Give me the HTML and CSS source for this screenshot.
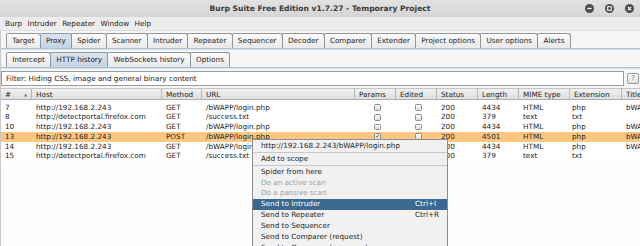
FILE: index.html
```html
<!DOCTYPE html>
<html>
<head>
<meta charset="utf-8">
<link rel="stylesheet" href="styles.css">
</head>
<body>
<div class="window">
  <div class="titlebar">
    <div></div>
    <div class="title">Burp Suite Free Edition v1.7.27 - Temporary Project</div>
    <div class="wbtns">
      <svg class="wbtn" viewBox="0 0 10 10"><circle cx="5" cy="5" r="5" fill="#4d4d4d"/><rect x="2.6" y="4.3" width="4.8" height="1.4" fill="#fff"/></svg>
      <svg class="wbtn" viewBox="0 0 10 10"><circle cx="5" cy="5" r="5" fill="#4d4d4d"/><rect x="3" y="3" width="4" height="4" fill="none" stroke="#fff" stroke-width="1.1"/></svg>
      <svg class="wbtn" viewBox="0 0 10 10"><circle cx="5" cy="5" r="5" fill="#4d4d4d"/><path d="M3.2 3.2L6.8 6.8M6.8 3.2L3.2 6.8" stroke="#fff" stroke-width="1.3"/></svg>
    </div>
  </div>
  <div class="menubar">
    <span>Burp</span><span>Intruder</span><span>Repeater</span><span>Window</span><span>Help</span>
  </div>
  <div class="content">
    <div class="tabs top">
      <div class="tab">Target</div>
      <div class="tab sel">Proxy</div>
      <div class="tab">Spider</div>
      <div class="tab">Scanner</div>
      <div class="tab">Intruder</div>
      <div class="tab">Repeater</div>
      <div class="tab">Sequencer</div>
      <div class="tab">Decoder</div>
      <div class="tab">Comparer</div>
      <div class="tab">Extender</div>
      <div class="tab">Project options</div>
      <div class="tab">User options</div>
      <div class="tab">Alerts</div>
    </div>
    <div class="tabline"></div>
    <div class="tabs sub">
      <div class="tab">Intercept</div>
      <div class="tab sel">HTTP history</div>
      <div class="tab">WebSockets history</div>
      <div class="tab">Options</div>
    </div>
    <div class="tabline"></div>
    <div class="filterbar">
      <div class="filter">Filter: Hiding CSS, image and general binary content</div>
      <div class="help">?</div>
    </div>
    <div class="table">
      <div class="row head">
        <div class="c">#<span class="arrow">▲</span></div>
        <div class="c">Host</div>
        <div class="c">Method</div>
        <div class="c">URL</div>
        <div class="c">Params</div>
        <div class="c">Edited</div>
        <div class="c">Status</div>
        <div class="c">Length</div>
        <div class="c">MIME type</div>
        <div class="c">Extension</div>
        <div class="c">Title</div>
      </div>
      <div class="body">
        <div class="row">
          <div class="c">7</div><div class="c">http://192.168.2.243</div><div class="c">GET</div><div class="c">/bWAPP/login.php</div>
          <div class="c cb"><span class="box"></span></div><div class="c cb"><span class="box"></span></div>
          <div class="c">200</div><div class="c">4434</div><div class="c">HTML</div><div class="c ext">php</div><div class="c">bWAPP</div>
        </div>
        <div class="row">
          <div class="c">8</div><div class="c">http://detectportal.firefox.com</div><div class="c">GET</div><div class="c">/success.txt</div>
          <div class="c cb"><span class="box"></span></div><div class="c cb"><span class="box"></span></div>
          <div class="c">200</div><div class="c">379</div><div class="c">text</div><div class="c ext">txt</div><div class="c"></div>
        </div>
        <div class="row">
          <div class="c">10</div><div class="c">http://192.168.2.243</div><div class="c">GET</div><div class="c">/bWAPP/login.php</div>
          <div class="c cb"><span class="box"></span></div><div class="c cb"><span class="box"></span></div>
          <div class="c">200</div><div class="c">4434</div><div class="c">HTML</div><div class="c ext">php</div><div class="c">bWAPP</div>
        </div>
        <div class="row selrow">
          <div class="c">13</div><div class="c">http://192.168.2.243</div><div class="c">POST</div><div class="c">/bWAPP/login.php</div>
          <div class="c cb"><span class="box checked">✓</span></div><div class="c cb"><span class="box"></span></div>
          <div class="c">200</div><div class="c">4501</div><div class="c">HTML</div><div class="c ext">php</div><div class="c">bWAPP</div>
        </div>
        <div class="row">
          <div class="c">14</div><div class="c">http://192.168.2.243</div><div class="c">GET</div><div class="c">/bWAPP/login.php</div>
          <div class="c cb"><span class="box"></span></div><div class="c cb"><span class="box"></span></div>
          <div class="c">200</div><div class="c">4434</div><div class="c">HTML</div><div class="c ext">php</div><div class="c">bWAPP</div>
        </div>
        <div class="row">
          <div class="c">15</div><div class="c">http://detectportal.firefox.com</div><div class="c">GET</div><div class="c">/success.txt</div>
          <div class="c cb"><span class="box"></span></div><div class="c cb"><span class="box"></span></div>
          <div class="c">200</div><div class="c">379</div><div class="c">text</div><div class="c ext">txt</div><div class="c"></div>
        </div>
      </div>
    </div>
  </div>
  <div class="ctxmenu">
    <div class="mi">http://192.168.2.243/bWAPP/login.php</div>
    <div class="sep"></div>
    <div class="mi">Add to scope</div>
    <div class="sep"></div>
    <div class="mi">Spider from here</div>
    <div class="mi dis">Do an active scan</div>
    <div class="mi dis">Do a passive scan</div>
    <div class="mi hl"><span>Send to Intruder</span><span class="key">Ctrl+I</span></div>
    <div class="mi"><span>Send to Repeater</span><span class="key">Ctrl+R</span></div>
    <div class="mi">Send to Sequencer</div>
    <div class="mi">Send to Comparer (request)</div>
    <div class="mi">Send to Comparer (response)</div>
  </div>
</div>
</body>
</html>
```
FILE: styles.css
```css
* { box-sizing: border-box; margin: 0; padding: 0; }
html, body { width: 640px; height: 246px; overflow: hidden; }
body {
  font-family: "DejaVu Sans", sans-serif;
  font-size: 7.25px;
  color: #1c1c1c;
  background: #fcfcfc;
}
.window { position: relative; height: 246px; overflow: hidden; }

.titlebar {
  height: 17px;
  display: grid;
  grid-template-columns: 1fr auto 1fr;
  align-items: center;
  background: linear-gradient(#e2e2e2, #d5d5d5);
}
.title {
  font-weight: bold;
  font-size: 7.6px;
  color: #3b3b3b;
  line-height: 14px;
}
.wbtns {
  display: flex;
  justify-content: flex-end;
  gap: 11px;
  padding-right: 6px;
}
.wbtn { width: 9px; height: 9px; display: block; }

.menubar {
  height: 14px;
  line-height: 14px;
  display: flex;
  gap: 5.4px;
  padding-left: 5px;
  background: #ededed;
  border-bottom: 1px solid #e0e0e0;
}

.content {
  border-left: 1px solid #c9c9c9;
  background: #fcfcfc;
}
.tabs {
  display: flex;
  background: #f6f6f6;
}
.tabs.top { padding: 2px 0 0 5px; }
.tabs.sub { padding: 2px 0 0 5px; }
.tab {
  height: 15px;
  line-height: 14px;
  padding: 0 5.2px;
  border: 1px solid #959595;
  border-bottom: none;
  border-radius: 2px 3px 0 0;
  background: linear-gradient(#fbfbfb, #e9e9e9);
  color: #222;
  margin-right: -1px;
}
.tab.sel {
  background: linear-gradient(#dbe5ef, #c3d3e3);
  border-color: #8c9aa8;
}
.tabline {
  height: 2px;
  background: #b3c1cf;
  border-bottom: 1px solid #d8dfe6;
}

.filterbar {
  display: flex;
  align-items: center;
  gap: 3px;
  padding: 2px 1px 2px 0;
  background: #f6f6f6;
}
.filter {
  flex: 1;
  height: 15px;
  line-height: 13px;
  padding-left: 4px;
  background: #fff;
  border: 1px solid #9c9c9c;
  color: #222;
}
.help {
  width: 12px;
  height: 11px;
  line-height: 9px;
  text-align: center;
  border: 1px solid #9a9a9a;
  border-radius: 2px;
  background: linear-gradient(#fafafa, #e2e2e2);
  color: #777;
  font-size: 7px;
}

.table { background: #fff; }
.row {
  display: grid;
  grid-template-columns: 31px 130px 40px 153px 41px 41px 41px 41px 51px 52px 70px;
  height: 9.7px;
  line-height: 9.7px;
  white-space: nowrap;
}
.row .c { padding-left: 4px; overflow: hidden; }
.row .c.ext { padding-left: 2px; }
.row.head {
  height: 12px;
  line-height: 11px;
  background: linear-gradient(#f1f1f1, #dedede);
  border-top: 1px solid #c4c4c4;
  border-bottom: 1px solid #b0b0b0;
  color: #222;
}
.row.head .c { border-right: 1px solid #b7b7b7; }
.row.head .c:first-child { display: flex; justify-content: space-between; padding-right: 4px; }
.arrow { font-size: 4px; color: #5b7690; }
.body { padding-top: 2.8px; height: 146px; background: #fdfdfd; }
.body .row { background: #fff; }
.row.selrow { background: #fcc780; }
.cb { display: flex; align-items: center; justify-content: center; padding-left: 4px; }
.box {
  width: 6.5px;
  height: 6.5px;
  border: 1px solid #8b8b8b;
  border-radius: 1.5px;
  background: linear-gradient(#fdfdfd, #dcdcdc);
  font-size: 6px;
  line-height: 4.5px;
  text-align: center;
  color: #333;
  overflow: hidden;
}

.ctxmenu {
  position: absolute;
  left: 252px;
  top: 139px;
  width: 196px;
  height: 120px;
  background: #f1f1f1;
  border: 1px solid #8e8e8e;
  padding-top: 1px;
}
.mi {
  height: 10.85px;
  line-height: 10.85px;
  padding: 0 10px 0 8px;
  display: flex;
  justify-content: space-between;
  color: #1e1e1e;
  white-space: nowrap;
}
.mi.dis { color: #9c9c9c; }
.mi.hl { background: #3b6990; color: #fff; }
.key { width: 22px; }
.sep {
  height: 1px;
  margin: 0.5px 0;
  background: #c7c7c7;
}
```
